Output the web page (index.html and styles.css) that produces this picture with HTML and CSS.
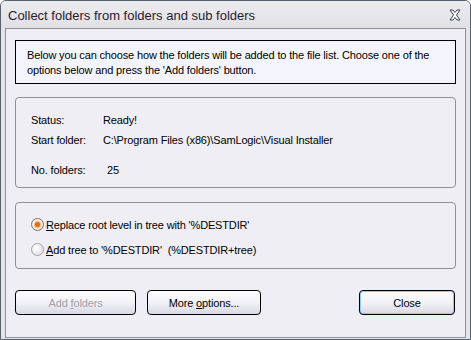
FILE: index.html
```html
<!DOCTYPE html>
<html lang="en">
<head>
    <meta charset="UTF-8">
    <title>Collect folders</title>
    <link rel="stylesheet" href="styles.css">
</head>
<body>
    <div class="window">
        <div class="titlebar">
            <span class="title">Collect folders from folders and sub folders</span>
            <span class="close">
                <svg width="14" height="12" viewBox="0 0 14 12">
                    <path d="M2 1 L5 1 L7 3.5 L9 1 L12 1 L8.5 6 L12 11 L9 11 L7 8.5 L5 11 L2 11 L5.5 6 Z" fill="#fff" stroke="#3d4450" stroke-width="1"/>
                </svg>
            </span>
        </div>
        <div class="frame">
            <div class="client">
                <div class="info">
                    Below you can choose how the folders will be added to the file list. Choose one of the
                    options below and press the 'Add folders' button.
                </div>

                <div class="group status-group">
                    <div class="row"><span class="label">Status:</span><span class="value">Ready!</span></div>
                    <div class="row"><span class="label">Start folder:</span><span class="value">C:\Program Files (x86)\SamLogic\Visual Installer</span></div>
                    <div class="row row-gap"><span class="label">No. folders:</span><span class="value num">25</span></div>
                </div>

                <div class="group options-group">
                    <label class="radio"><span class="dot checked"></span><span><u>R</u>eplace root level in tree with '%DESTDIR'</span></label>
                    <label class="radio"><span class="dot"></span><span><u>A</u>dd tree to '%DESTDIR'&nbsp; (%DESTDIR+tree)</span></label>
                </div>

                <div class="buttons">
                    <button class="btn btn-add" disabled>Add <u>f</u>olders</button>
                    <button class="btn btn-more">More <u>o</u>ptions...</button>
                    <button class="btn btn-close">Close</button>
                </div>
            </div>
        </div>
    </div>
</body>
</html>
```

FILE: styles.css
```css
html, body {
    margin: 0;
    padding: 0;
    background: #ffffff;
}
body {
    font-family: "Liberation Sans", Arial, sans-serif;
    font-size: 11px;
    letter-spacing: -0.15px;
    color: #000;
}
.window {
    width: 471px;
    height: 340px;
    box-sizing: border-box;
    border: 1px solid #58606c;
    border-radius: 6px 6px 0 0;
    background: #e3e3e8;
    display: flex;
    flex-direction: column;
}
.titlebar {
    height: 27px;
    display: flex;
    align-items: center;
    justify-content: space-between;
    padding: 0 8px 0 7px;
    background: linear-gradient(#ececf0, #e0e0e5);
    border-radius: 5px 5px 0 0;
}
.title {
    font-size: 13px;
    letter-spacing: 0;
    color: #2a1a2e;
    padding-top: 1px;
}
.close {
    display: flex;
    padding-top: 1px;
}
.frame {
    flex: 1;
    padding: 0 4px 1px 4px;
    display: flex;
}
.client {
    flex: 1;
    border: 1px solid #8d929a;
    background: #efeef4;
    padding: 11px 9px 0 9px;
}
.info {
    border: 1px solid #000;
    background: #f4f4fc;
    height: 44px;
    box-sizing: border-box;
    padding: 7px 11px 0 11px;
    line-height: 15px;
}
.group {
    border: 1px solid #8e9095;
    border-radius: 4px;
    box-sizing: border-box;
}
.status-group {
    margin-top: 13px;
    height: 91px;
    padding: 14px 15px 0 15px;
}
.row {
    display: flex;
    height: 20px;
    line-height: 16px;
}
.row-gap {
    margin-top: 10px;
}
.label {
    width: 72px;
}
.num {
    padding-left: 4px;
}
.options-group {
    margin-top: 14px;
    height: 67px;
    padding: 9px 15px 0 15px;
}
.radio {
    display: flex;
    align-items: center;
    height: 25px;
    gap: 2px;
}
.radio u {
    text-decoration: underline;
}
.dot {
    width: 13px;
    height: 13px;
    box-sizing: border-box;
    border-radius: 50%;
    border: 1px solid #a0a0a6;
    background: radial-gradient(circle at 40% 35%, #ffffff, #d8d8dc);
    display: flex;
    align-items: center;
    justify-content: center;
}
.dot.checked {
    border-color: #8a7060;
}
.dot.checked::after {
    content: "";
    width: 5px;
    height: 5px;
    border-radius: 50%;
    background: #e46c0a;
    box-shadow: 0 0 0 1px #f8b870;
}
.buttons {
    display: flex;
    margin-top: 21px;
}
.btn {
    font-family: "Liberation Sans", Arial, sans-serif;
    font-size: 11px;
    letter-spacing: -0.15px;
    height: 25px;
    border: 1px solid #000;
    border-radius: 4px;
    background: linear-gradient(#fdfdff 0%, #f2f2f6 50%, #d8d8e4 100%);
    color: #000;
    padding: 0;
}
.btn-add {
    width: 121px;
    color: #a0a0a8;
}
.btn-more {
    width: 114px;
    margin-left: 11px;
}
.btn-close {
    width: 96px;
    margin-left: auto;
    margin-right: 1px;
    box-shadow: inset 0 0 0 1px #9cc4f4;
}
```
